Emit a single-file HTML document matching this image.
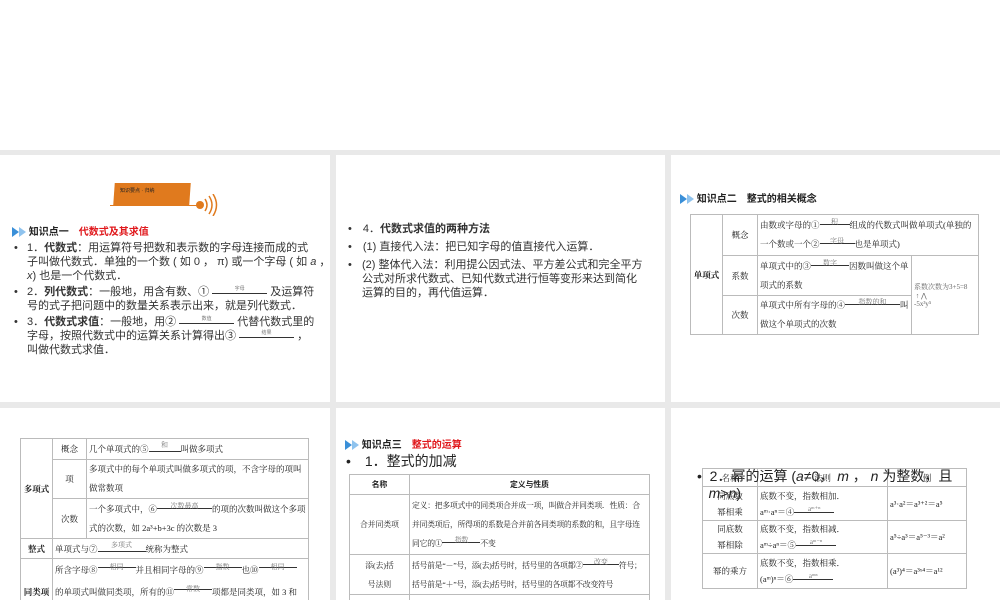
<!DOCTYPE html>
<html><head><meta charset="utf-8"><style>
*{margin:0;padding:0;box-sizing:border-box}
body{width:1000px;height:600px;overflow:hidden;background:#fff;position:relative;font-family:"Liberation Sans","Noto Sans CJK SC",sans-serif;color:#222}
.bg{position:absolute;left:0;top:150px;width:1000px;height:450px;background:#e9e9e9}
.s{position:absolute;background:#fff;overflow:hidden}
.a{position:absolute;white-space:nowrap}
.t{font-size:11px;line-height:14px;color:#333}
.arr{display:inline-block;width:0;height:0;border-top:5px solid transparent;border-bottom:5px solid transparent;border-left:7px solid #3a8fd8;vertical-align:middle}
.arr2{border-left-color:#8fc3ee}
.h{font-size:10px;font-weight:bold;color:#222}
.red{color:#e0181c}
table{position:absolute;border-collapse:collapse;font-family:"Liberation Serif","Noto Serif CJK SC",serif;font-size:8.5px;color:#222;table-layout:fixed}
td{border:1px solid #bbb;padding:0 2px;vertical-align:middle;overflow:hidden}
.c{text-align:center;font-weight:bold}
.u{display:inline-block;border-bottom:1px solid #333;text-align:center;color:#777;font-size:7px;vertical-align:top;position:relative;top:-3px;height:12px}
</style></head><body>
<div class="bg"></div>

<!-- slide 1 -->
<div class="s" style="left:0;top:155px;width:330px;height:247px">
 <div class="a" style="left:114px;top:28px;width:76px;height:22px;background:#e07a1e;transform:skewX(-4deg)"></div>
 <div class="a" style="left:120px;top:32px;font-size:5px;color:#222">知识要点 · 归纳</div>
 <div class="a" style="left:110px;top:50px;width:90px;height:1px;background:#e07a1e"></div>
 <div class="a" style="left:196px;top:46px;width:8px;height:8px;border-radius:50%;background:#e07a1e"></div>
 <svg class="a" style="left:203px;top:39px" width="16" height="22"><path d="M2 5 Q6 11 2 17 M6 2 Q12 11 6 20 M10 0 Q17 11 10 22" stroke="#e07a1e" stroke-width="1.5" fill="none"/></svg>
 <div class="a h" style="left:12px;top:68px"><span class="arr"></span><span class="arr arr2"></span> 知识点一　<span class="red">代数式及其求值</span></div>
 <div class="a t" style="left:14px;top:86px">•</div>
 <div class="a t" style="left:27px;top:86px">1．<b>代数式</b>：用运算符号把数和表示数的字母连接而成的式<br>子叫做代数式．单独的一个数 ( 如 0 ， π) 或一个字母 ( 如 <i>a</i> ，<br><i>x</i>) 也是一个代数式．</div>
 <div class="a t" style="left:14px;top:130px">•</div>
 <div class="a t" style="left:27px;top:130px">2．<b>列代数式</b>：一般地，用含有数、① <span class="u" style="width:55px;font-size:5px">字母</span> 及运算符<br>号的式子把问题中的数量关系表示出来，就是列代数式．</div>
 <div class="a t" style="left:14px;top:160px">•</div>
 <div class="a t" style="left:27px;top:160px">3．<b>代数式求值</b>：一般地，用② <span class="u" style="width:55px;font-size:5px">数值</span> 代替代数式里的<br>字母，按照代数式中的运算关系计算得出③ <span class="u" style="width:55px;font-size:5px">结果</span> ，<br>叫做代数式求值．</div>
</div>

<!-- slide 2 -->
<div class="s" style="left:336px;top:155px;width:329px;height:247px">
 <div class="a t" style="left:12px;top:67px">•　4．<b>代数式求值的两种方法</b></div>
 <div class="a t" style="left:12px;top:85px">•　(1) 直接代入法：把已知字母的值直接代入运算．</div>
 <div class="a t" style="left:12px;top:103px">•</div>
 <div class="a t" style="left:26px;top:103px">(2) 整体代入法：利用提公因式法、平方差公式和完全平方<br>公式对所求代数式、已知代数式进行恒等变形来达到简化<br>运算的目的，再代值运算．</div>
</div>

<!-- slide 3 -->
<div class="s" style="left:671px;top:155px;width:329px;height:247px">
 <div class="a h" style="left:9px;top:35px"><span class="arr"></span><span class="arr arr2"></span> 知识点二　整式的相关概念</div>
 <table style="left:19px;top:59px;width:289px;height:120px">
  <colgroup><col style="width:32px"><col style="width:35px"><col style="width:154px"><col></colgroup>
  <tr style="height:41px"><td rowspan="3" class="c">单项式</td><td style="text-align:center">概念</td><td colspan="2" style="line-height:19px">由数或字母的①<span class="u" style="width:30px">积</span>组成的代数式叫做单项式(单独的一个数或一个②<span class="u" style="width:35px">字母</span>也是单项式)</td></tr>
  <tr style="height:40px"><td style="text-align:center">系数</td><td style="line-height:19px">单项式中的③<span class="u" style="width:38px">数字</span>因数叫做这个单项式的系数</td><td rowspan="2" style="color:#666;font-size:7px">系数次数为3+5=8<br>&nbsp;↑ ⋀<br>-5x³y⁵</td></tr>
  <tr style="height:39px"><td style="text-align:center">次数</td><td style="line-height:19px">单项式中所有字母的④<span class="u" style="width:55px">指数的和</span>叫做这个单项式的次数</td></tr>
 </table>
</div>

<!-- slide 4 -->
<div class="s" style="left:0;top:408px;width:330px;height:192px">
 <table style="left:20px;top:30px;width:289px">
  <colgroup><col style="width:32px"><col style="width:34px"><col></colgroup>
  <tr style="height:21px"><td rowspan="3" class="c">多项式</td><td style="text-align:center">概念</td><td>几个单项式的⑤<span class="u" style="width:32px">和</span>叫做多项式</td></tr>
  <tr style="height:38px"><td style="text-align:center">项</td><td style="line-height:19px">多项式中的每个单项式叫做多项式的项，不含字母的项叫做常数项</td></tr>
  <tr style="height:40px"><td style="text-align:center">次数</td><td style="line-height:19px">一个多项式中，⑥<span class="u" style="width:55px">次数最高</span>的项的次数叫做这个多项式的次数，如 2a³+b+3c 的次数是 3</td></tr>
  <tr style="height:20px"><td class="c">整式</td><td colspan="2">单项式与⑦<span class="u" style="width:48px">多项式</span>统称为整式</td></tr>
  <tr style="height:50px"><td class="c">同类项</td><td colspan="2" style="line-height:22px;vertical-align:top">所含字母⑧<span class="u" style="width:38px">相同</span>并且相同字母的⑨<span class="u" style="width:38px">指数</span>也⑩<span class="u" style="width:38px">相同</span><br>的单项式叫做同类项，所有的⑪<span class="u" style="width:38px">常数</span>项都是同类项，如 3 和½，a</td></tr>
 </table>
</div>

<!-- slide 5 -->
<div class="s" style="left:336px;top:408px;width:329px;height:192px">
 <div class="a h" style="left:9px;top:28px"><span class="arr"></span><span class="arr arr2"></span> 知识点三　<span class="red">整式的运算</span></div>
 <div class="a" style="left:10px;top:43px;font-size:14px;color:#222">•　1．整式的加减</div>
 <table style="left:13px;top:66px;width:301px;font-size:7.8px">
  <colgroup><col style="width:60px"><col></colgroup>
  <tr style="height:20px"><td class="c" style="font-family:'Liberation Sans','Noto Sans CJK SC',sans-serif">名称</td><td class="c" style="font-family:'Liberation Sans','Noto Sans CJK SC',sans-serif">定义与性质</td></tr>
  <tr style="height:60px"><td style="text-align:center">合并同类项</td><td style="line-height:19px;letter-spacing:-0.2px">定义：把多项式中的同类项合并成一项，叫做合并同类项．性质：合并同类项后，所得项的系数是合并前各同类项的系数的和，且字母连同它的①<span class="u" style="width:38px">指数</span>不变</td></tr>
  <tr style="height:40px"><td style="text-align:center;line-height:19px">添(去)括<br>号法则</td><td style="line-height:19px;letter-spacing:-0.2px">括号前是“－”号，添(去)括号时，括号里的各项都②<span class="u" style="width:36px">改变</span>符号；括号前是“＋”号，添(去)括号时，括号里的各项都不改变符号</td></tr>
  <tr style="height:20px"><td style="text-align:center">整式加减法</td><td></td></tr>
 </table>
</div>

<!-- slide 6 -->
<div class="s" style="left:671px;top:408px;width:329px;height:192px">
 <table style="left:31px;top:60px;width:265px">
  <colgroup><col style="width:55px"><col style="width:130px"><col></colgroup>
  <tr style="height:18px"><td style="text-align:center">名称</td><td style="text-align:center">法则</td><td style="text-align:center">例</td></tr>
  <tr style="height:34px"><td style="text-align:center;line-height:16px">同底数<br>幂相乘</td><td style="line-height:16px">底数不变，指数相加．<br>aᵐ·aⁿ＝④<span class="u" style="width:40px">aᵐ⁺ⁿ</span></td><td>a³·a²＝a³⁺²＝a⁵</td></tr>
  <tr style="height:33px"><td style="text-align:center;line-height:16px">同底数<br>幂相除</td><td style="line-height:16px">底数不变，指数相减．<br>aᵐ÷aⁿ＝⑤<span class="u" style="width:40px">aᵐ⁻ⁿ</span></td><td>a⁵÷a³＝a⁵⁻³＝a²</td></tr>
  <tr style="height:35px"><td style="text-align:center">幂的乘方</td><td style="line-height:16px">底数不变，指数相乘．<br>(aᵐ)ⁿ＝⑥<span class="u" style="width:40px">aᵐⁿ</span></td><td>(a³)⁴＝a³ˣ⁴＝a¹²</td></tr>
 </table>
 <div class="a" style="left:26px;top:60px;font-size:14px;line-height:17px;color:#222">•&nbsp; 2．幂的运算 (<i>a</i>≠0，&nbsp;<i>m</i> ，&nbsp;<i>n</i> 为整数，且<br>&nbsp;&nbsp;&nbsp;<i>m</i>&gt;<i>n</i>)</div>
</div>
</body></html>
